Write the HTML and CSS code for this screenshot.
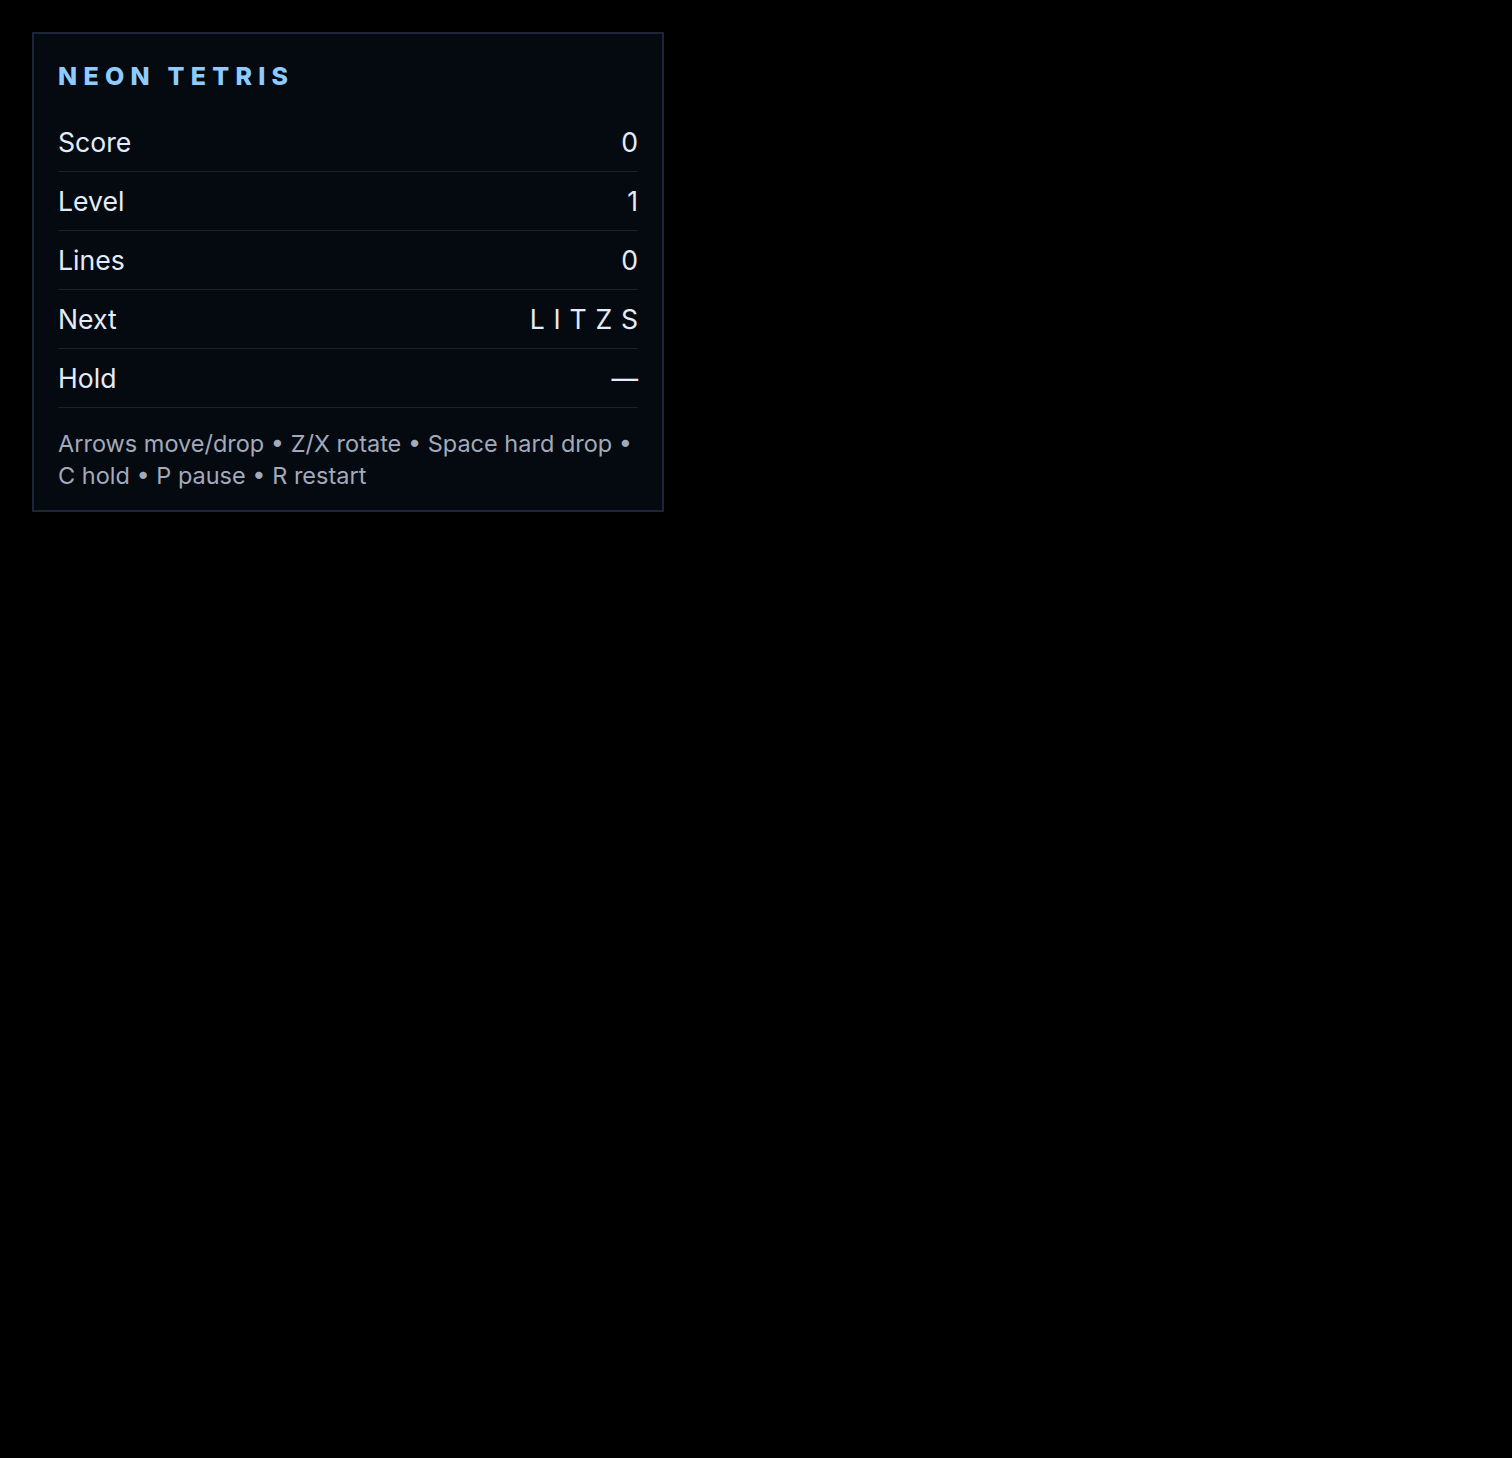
FILE: index.html
```html
<!DOCTYPE html>
<html lang="en">
<head>
<meta charset="utf-8">
<title>Neon Tetris</title>
<link rel="stylesheet" href="styles.css">
</head>
<body>
<div class="panel">
  <h1 class="title">NEON TETRIS</h1>
  <div class="stats">
    <div class="row"><span class="label">Score</span><span class="value">0</span></div>
    <div class="row"><span class="label">Level</span><span class="value">1</span></div>
    <div class="row"><span class="label">Lines</span><span class="value">0</span></div>
    <div class="row"><span class="label">Next</span><span class="value next">LITZS</span></div>
    <div class="row"><span class="label">Hold</span><span class="value">—</span></div>
  </div>
  <p class="help">Arrows move/drop • Z/X rotate • Space hard drop • C hold • P pause • R restart</p>
</div>
</body>
</html>
```
FILE: styles.css
```css
html, body {
  margin: 0;
  background: #000;
}
body {
  padding: 32px;
  font-family: Inter, "Noto Sans", sans-serif;
}
.panel {
  box-sizing: border-box;
  width: 632px;
  height: 480px;
  background: #050910;
  border: 2px solid #1c2638;
  padding: 24px;
  display: flex;
  flex-direction: column;
}
.title {
  margin: 0 0 19px;
  font-size: 25px;
  line-height: 36px;
  font-weight: 800;
  letter-spacing: 0.25em;
  color: #8ecbff;
}
.stats {
  display: flex;
  flex-direction: column;
}
.row {
  display: flex;
  justify-content: space-between;
  align-items: center;
  height: 58px;
  border-bottom: 1px solid #1a2233;
  font-size: 26.6px;
  color: #e4ecf8;
}
.next {
  letter-spacing: 0.33em;
  margin-right: -0.33em;
}
.help {
  margin: 20px 0 0;
  font-size: 23.5px;
  line-height: 32px;
  color: #a2aabb;
}
```
